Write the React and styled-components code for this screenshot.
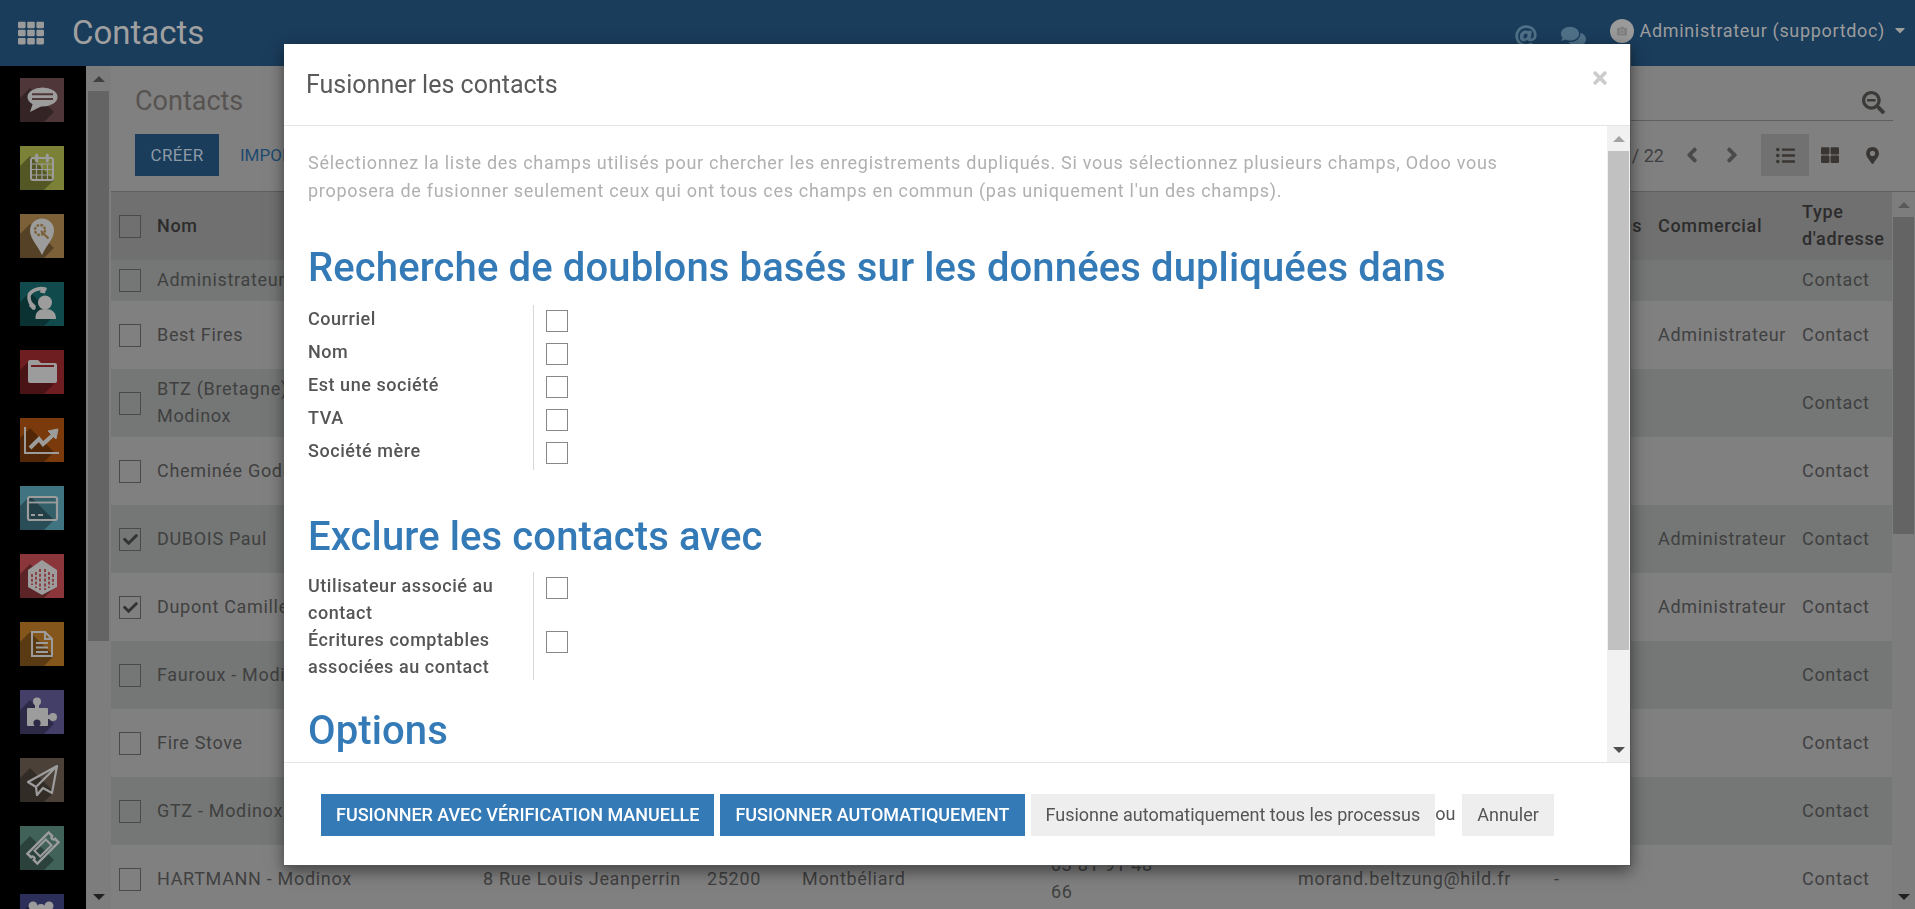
import React from 'react'
import styled, { createGlobalStyle } from 'styled-components'
import {
  FaTh, FaThLarge, FaComments, FaSearchMinus, FaListUl, FaMapMarkerAlt, FaAngleLeft, FaAngleRight,
  FaCheck, FaAt, FaCamera, FaTimes, FaCaretDown,
} from 'react-icons/fa'

const GlobalStyle = createGlobalStyle`
  html, body { margin: 0; height: 100%; overflow: hidden; background: #808080; }
  * { box-sizing: border-box; }
  body { font-family: Roboto, "Liberation Sans", sans-serif; font-size: 18px; }
`

const Page = styled.div`
  width: 1915px;
  height: 909px;
  display: flex;
  flex-direction: column;
  overflow: hidden;
`
const Navbar = styled.header`
  height: 66px;
  flex: none;
  background: #1a3d5c;
  color: #9c9c9c;
  display: flex;
  align-items: center;
  padding: 0 7px 0 18px;
`
const AppTitle = styled.div`
  font-size: 33px;
  margin: 0 0 2px 28px;
  color: #a0a0a0;
`
const NavRight = styled.div`
  margin-left: auto;
  display: flex;
  align-items: center;
  font-size: 18px;
`
const NavIcon = styled.span`
  display: flex;
  color: #4f7188;
  margin-right: 24px;
  padding-top: 6px;
`
const Avatar = styled.span`
  width: 24px;
  height: 24px;
  border-radius: 50%;
  background: #9a9a9a;
  color: #808080;
  display: flex;
  align-items: center;
  justify-content: center;
  margin-right: 6px;
  margin-bottom: 4px;
`
const UserName = styled.span`
  margin-bottom: 6px;
  display: flex;
  align-items: center;
  gap: 7px;
  color: #9c9c9c;
  letter-spacing: 0.67px;
`
const Main = styled.div`
  flex: 1;
  display: flex;
  min-height: 0;
`
const Sidebar = styled.nav`
  width: 86px;
  flex: none;
  background: #000;
  padding: 12px 0 0 20px;
  display: flex;
  flex-direction: column;
  gap: 24px;
  overflow: hidden;
`
const Tile = styled.svg`
  width: 44px;
  height: 44px;
  flex: none;
  display: block;
  color: #9c9c9c;
  background: ${p => p.$color};
`
const Scrollbar = styled.div`
  width: ${p => p.$width}px;
  flex: none;
  display: flex;
  flex-direction: column;
  align-items: center;
  background: ${p => p.$track};
`
const ArrowBox = styled.div`
  height: ${p => p.$height}px;
  flex: none;
  display: flex;
  align-items: center;
  justify-content: center;
  &::after {
    content: '';
    border-left: 6px solid transparent;
    border-right: 6px solid transparent;
    ${p => (p.$down ? `border-top: 6px solid ${p.$color};` : `border-bottom: 6px solid ${p.$color};`)}
  }
`
const Thumb = styled.div`
  width: ${p => p.$width}px;
  height: ${p => p.$height}px;
  flex: none;
  background: ${p => p.$color};
`
const Spacer = styled.div`
  flex: 1;
`
const Content = styled.main`
  flex: 1;
  min-width: 0;
  display: flex;
  flex-direction: column;
`
const ControlTop = styled.div`
  height: 55px;
  flex: none;
  display: flex;
  margin-right: 22px;
`
const Breadcrumb = styled.div`
  flex: 1;
  padding: 14px 0 0 24px;
  display: flex;
  align-items: center;
  font-size: 27px;
  color: #575350;
`
const SearchBox = styled.div`
  flex: 1;
  display: flex;
  justify-content: flex-end;
  align-items: center;
  border-bottom: 1px solid #5f5f5f;
  padding: 18px 8px 0 0;
  color: #3a3a38;
`
const ControlBar = styled.div`
  height: 71px;
  flex: none;
  display: flex;
  align-items: center;
  padding: 0 22px 2px 24px;
  border-bottom: 1px solid #5f5f5f;
`
const PrimaryDim = styled.div`
  height: 42px;
  width: 84px;
  background: #1a3d5c;
  color: #8d9aa5;
  display: flex;
  align-items: center;
  justify-content: center;
  font-size: 17px;
  letter-spacing: 0.3px;
`
const LinkDim = styled.div`
  margin-left: 21px;
  color: #1d4a70;
  font-size: 17px;
`
const Pager = styled.div`
  margin-left: auto;
  display: flex;
  align-items: center;
  margin-right: 9px;
  color: #404040;
`
const PagerText = styled.span`
  margin-right: 8px;
`
const PagerBtn = styled.span`
  width: 40px;
  display: flex;
  justify-content: center;
  color: #4a4a4a;
`
const ViewBtn = styled.span`
  width: ${p => p.$width}px;
  height: 42px;
  display: flex;
  align-items: center;
  justify-content: center;
  color: #383532;
  background: ${p => (p.$active ? '#717171' : 'transparent')};
`
const TableWrap = styled.div`
  flex: 1;
  min-height: 0;
  display: flex;
`
const Table = styled.div`
  flex: 1;
  min-width: 0;
  overflow: hidden;
`
const Row = styled.div`
  display: grid;
  grid-template-columns: 46px 326px 224px 95px 249px 247px 256px 104px 144px 90px;
  align-items: center;
  height: ${p => p.$height || 68}px;
  background: ${p => p.$bg};
  color: ${p => (p.$head ? '#2c2c2c' : '#404040')};
  font-weight: ${p => (p.$head ? 500 : 400)};
  line-height: 27px;
  letter-spacing: 0.68px;
`
const Cell = styled.div`
  white-space: nowrap;
  padding-bottom: 2px;
`
const Check = styled.span`
  width: 22px;
  height: 23px;
  margin-left: 8px;
  border: 1px solid #4a4a4a;
  display: flex;
  align-items: center;
  justify-content: center;
  color: #333;
`
const Overlay = styled.div`
  position: fixed;
  left: 284px;
  top: 44px;
  width: 1347px;
  height: 822px;
  background: #fff;
  border: 1px solid #555;
  border-width: 0 1px 1px 0;
  box-shadow: 0 5px 15px rgba(0, 0, 0, 0.5);
  display: flex;
  flex-direction: column;
`
const ModalHeader = styled.div`
  height: 82px;
  flex: none;
  padding: 0 20px 0 22px;
  display: flex;
  align-items: center;
  justify-content: space-between;
  border-bottom: 1px solid #e5e5e5;
`
const ModalTitle = styled.h4`
  margin: 0;
  font-size: 25px;
  font-weight: 400;
  color: #5a5a5a;
`
const CloseBtn = styled.span`
  display: flex;
  color: #cccccc;
  margin-bottom: 14px;
`
const ModalMiddle = styled.div`
  flex: 1;
  min-height: 0;
  display: flex;
`
const ModalBody = styled.div`
  flex: 1;
  min-width: 0;
  overflow: hidden;
  padding: 23px 24px 0;
`
const Intro = styled.p`
  margin: 0 0 41px;
  line-height: 28px;
  color: #b0b0b0;
  letter-spacing: 0.7px;
  white-space: nowrap;
`
const SectionTitle = styled.h1`
  margin: ${p => p.$top || 0}px 0 ${p => p.$bottom ?? 15}px;
  font-size: 40px;
  line-height: 44px;
  font-weight: 500;
  color: #337ab7;
  letter-spacing: 0.12px;
`
const FieldGroup = styled.div`
  display: grid;
  grid-template-columns: 225px 1fr;
`
const FieldLabel = styled.div`
  font-weight: 500;
  line-height: 27px;
  color: #555;
  letter-spacing: 0.55px;
  min-height: ${p => p.$height}px;
`
const FieldValue = styled.div`
  border-left: 1px solid #d8d8d8;
  padding: ${p => p.$pad}px 0 0 12px;
  min-height: ${p => p.$height}px;
`
const CheckBox = styled.span`
  display: block;
  width: 22px;
  height: 22px;
  border: 1px solid #888;
`
const ModalFooter = styled.div`
  height: 103px;
  flex: none;
  border-top: 1px solid #e5e5e5;
  padding: 31px 0 0 37px;
  display: flex;
  align-items: flex-start;
`
const Button = styled.button`
  height: 42px;
  border: 0;
  padding: 0 15px 2px;
  margin-right: ${p => p.$gap ?? 6}px;
  font: inherit;
  font-weight: ${p => (p.$primary ? 500 : 400)};
  letter-spacing: ${p => (p.$primary ? '-0.03px' : '0')};
  text-transform: ${p => (p.$primary ? 'uppercase' : 'none')};
  background: ${p => (p.$primary ? '#337ab7' : '#eeeeee')};
  color: ${p => (p.$primary ? '#fff' : '#555')};
`
const Or = styled.span`
  line-height: 40px;
  color: #555;
  width: 27px;
`

const shade = 'rgba(0,0,0,0.32)'

const tiles = [
  {
    color: '#4e3639',
    glyph: (
      <g>
        <ellipse cx="22.5" cy="19" rx="15" ry="9.5" fill="currentColor" />
        <path d="M13 25 L10 34 L22 28 Z" fill="currentColor" />
        <path d="M12 16.2h21M12 21h21" stroke="#4e3639" strokeWidth="2" />
      </g>
    ),
  },
  {
    color: '#7b8136',
    glyph: (
      <g fill="none" stroke="currentColor">
        <rect x="11" y="12" width="22" height="22" rx="2" strokeWidth="2" />
        <path d="M16.7 9v6M27.3 9v6" strokeWidth="3" strokeLinecap="round" />
        <path d="M11 18h22M11 23.500h22M11 29h22M16.500 18v16M22 18v16M27.500 18v16" strokeWidth="1.2" />
      </g>
    ),
  },
  {
    color: '#7c6138',
    glyph: (
      <g>
        <path d="M22 41 C17 30 10 25 10 16.500 A12 12 0 0 1 34 16.500 C34 25 27 30 22 41 Z" fill="currentColor" />
        <circle cx="20" cy="16" r="5" fill="none" stroke="#7c6138" strokeWidth="2.4" strokeDasharray="2.600 1.300" />
        <path d="M21 17l7.500 7.500" stroke="#7c6138" strokeWidth="2.200" />
      </g>
    ),
  },
  {
    color: '#114a4c',
    glyph: (
      <g>
        <path d="M25 7 C19 5 8 9 9 16 C9.500 20 11 23 14 26" fill="none" stroke="currentColor" strokeWidth="3.500" strokeLinecap="round" />
        <path d="M21 5.500l5 1-1 5-5-1ZM12 20l4 4-3 4-4-4Z" fill="currentColor" />
        <circle cx="25" cy="20.500" r="7" fill="currentColor" />
        <path d="M15.500 37 C15 30 19 27 25 27 C32 27 36 30 36 37 Z" fill="currentColor" />
      </g>
    ),
  },
  {
    color: '#6e1d21',
    glyph: (
      <g>
        <path d="M8 12 a2 2 0 0 1 2 -2 h8 l3 3 h14 a2 2 0 0 1 2 2 v16 a2 2 0 0 1 -2 2 H10 a2 2 0 0 1 -2 -2 Z" fill="currentColor" />
        <path d="M11 16h23" stroke="#6e1d21" strokeWidth="2" />
      </g>
    ),
  },
  {
    color: '#7a3a0c',
    glyph: (
      <g fill="none" stroke="currentColor">
        <path d="M5 9v26h34" strokeWidth="2" />
        <path d="M10 30l9-9 4 5 10-9" strokeWidth="4" />
        <path d="M28 13l10-2-2 10Z" fill="currentColor" strokeWidth="1" />
      </g>
    ),
  },
  {
    color: '#3f7480',
    glyph: (
      <g>
        <rect x="8" y="11" width="29" height="23" rx="2" fill="rgba(0,0,0,0.18)" stroke="currentColor" strokeWidth="2.200" />
        <path d="M9 16.500h27" stroke="currentColor" strokeWidth="1.800" />
        <path d="M11 29h4M18 29h5" stroke="currentColor" strokeWidth="2" />
      </g>
    ),
  },
  {
    color: '#8a363a',
    glyph: (
      <g>
        <path d="M22 6 L37 16 V33 L22 41 L8 33 V16 Z" fill="currentColor" />
        <path d="M12 20v11M16 18v16M20 15v21M25 15v21M29 18v16M33 20v11" stroke="#8a363a" strokeWidth="1.800" strokeDasharray="3 1.800" />
      </g>
    ),
  },
  {
    color: '#84561b',
    glyph: (
      <g fill="none" stroke="currentColor" strokeWidth="2">
        <path d="M12 10h13l7 7v17H12Z" />
        <path d="M25 10v7h7" />
        <path d="M16 21h12M16 25.500h12M16 30h12" />
      </g>
    ),
  },
  {
    color: '#433f69',
    glyph: (
      <g fill="currentColor">
        <circle cx="17" cy="11.500" r="4" />
        <rect x="15" y="12" width="4" height="8" />
        <rect x="7" y="18" width="21" height="18" rx="1" />
        <circle cx="33" cy="27" r="4" />
        <rect x="26" y="25" width="6" height="4" />
        <circle cx="17" cy="33" r="3.600" fill="#2d2a47" />
        <rect x="15.500" y="33" width="3" height="4" fill="#2d2a47" />
      </g>
    ),
  },
  {
    color: '#4b4138',
    glyph: (
      <path d="M37 8 L8 24 L16 29 L17 37 L23 30 L32 35 Z M37 8 L16 29" fill="none" stroke="currentColor" strokeWidth="2.200" strokeLinejoin="round" />
    ),
  },
  {
    color: '#406259',
    glyph: (
      <g transform="rotate(-45 23 22)">
        <path d="M8 15 h30 v5 a2 2 0 0 0 0 4 v5 H8 v-5 a2 2 0 0 0 0 -4 Z" fill="none" stroke="currentColor" strokeWidth="2.400" />
        <rect x="15" y="18" width="16" height="8" fill="none" stroke="currentColor" strokeWidth="2" />
      </g>
    ),
  },
  {
    color: '#2c2f5a',
    glyph: (
      <g fill="currentColor">
        <circle cx="13" cy="12" r="4.500" />
        <circle cx="29" cy="12" r="4.500" />
        <circle cx="21" cy="15" r="5" />
      </g>
    ),
  },
]

const rows = [
  { name: 'Administrateur', height: 41, type: 'Contact' },
  { name: 'Best Fires', sales: 'Administrateur', type: 'Contact' },
  { name: <>BTZ (Bretagne) -<br />Modinox</>, type: 'Contact' },
  { name: 'Cheminée Godin', type: 'Contact' },
  { name: 'DUBOIS Paul', checked: true, sales: 'Administrateur', type: 'Contact' },
  { name: 'Dupont Camille', checked: true, sales: 'Administrateur', type: 'Contact' },
  { name: 'Fauroux - Modinox', type: 'Contact' },
  { name: 'Fire Stove', type: 'Contact' },
  { name: 'GTZ - Modinox', type: 'Contact' },
  {
    name: 'HARTMANN - Modinox',
    address: '8 Rue Louis Jeanperrin',
    zip: '25200',
    city: 'Montbéliard',
    phone: <>03 81 91 48<br />66</>,
    email: 'morand.beltzung@hild.fr',
    dash: '-',
    type: 'Contact',
  },
]

const duplicateFields = ['Courriel', 'Nom', 'Est une société', 'TVA', 'Société mère']
const excludeFields = [
  <>Utilisateur associé au<br />contact</>,
  <>Écritures comptables<br />associées au contact</>,
]

export default function App() {
  return (
    <>
      <GlobalStyle />
      <Page>
        <Navbar>
          <FaTh size={26} color="#9a9a9a" />
          <AppTitle>Contacts</AppTitle>
          <NavRight>
            <NavIcon><FaAt size={22} /></NavIcon>
            <NavIcon><FaComments size={25} /></NavIcon>
            <Avatar><FaCamera size={10} /></Avatar>
            <UserName>Administrateur (supportdoc) <FaCaretDown size={16} /></UserName>
          </NavRight>
        </Navbar>
        <Main>
          <Sidebar>
            {tiles.map((t, i) => (
              <Tile key={i} viewBox="0 0 44 44" $color={t.color}>
                <polygon points="10,10 0,20 0,44 24,44 34,34" fill={shade} />
                {t.glyph}
              </Tile>
            ))}
          </Sidebar>
          <Scrollbar $width={25} $track="#7d7d7d">
            <ArrowBox $height={25} $color="#404040" />
            <Thumb $width={21} $height={550} $color="#646464" />
            <Spacer />
            <ArrowBox $height={25} $down $color="#202020" />
          </Scrollbar>
          <Content>
            <ControlTop>
              <Breadcrumb>Contacts</Breadcrumb>
              <SearchBox><FaSearchMinus size={23} /></SearchBox>
            </ControlTop>
            <ControlBar>
              <PrimaryDim>CRÉER</PrimaryDim>
              <LinkDim>IMPORTER</LinkDim>
              <Pager>
                <PagerText>1-22 / 22</PagerText>
                <PagerBtn><FaAngleLeft size={24} /></PagerBtn>
                <PagerBtn><FaAngleRight size={24} /></PagerBtn>
              </Pager>
              <ViewBtn $width={48} $active><FaListUl size={19} /></ViewBtn>
              <ViewBtn $width={42}><FaThLarge size={18} /></ViewBtn>
              <ViewBtn $width={42}><FaMapMarkerAlt size={17} /></ViewBtn>
            </ControlBar>
            <TableWrap>
              <Table>
                <Row $height={68} $bg="#707070" $head>
                  <Check />
                  <Cell>Nom</Cell>
                  <Cell>Adresse</Cell>
                  <Cell>CP</Cell>
                  <Cell>Ville</Cell>
                  <Cell>Téléphone</Cell>
                  <Cell>Courriel</Cell>
                  <Cell>Étiquettes</Cell>
                  <Cell>Commercial</Cell>
                  <Cell>Type<br />d'adresse</Cell>
                </Row>
                {rows.map((r, i) => (
                  <Row key={i} $height={r.height} $bg={i % 2 ? '#808080' : '#747776'}>
                    <Check>{r.checked && <FaCheck size={15} />}</Check>
                    <Cell>{r.name}</Cell>
                    <Cell>{r.address}</Cell>
                    <Cell>{r.zip}</Cell>
                    <Cell>{r.city}</Cell>
                    <Cell>{r.phone}</Cell>
                    <Cell>{r.email}</Cell>
                    <Cell>{r.dash}</Cell>
                    <Cell>{r.sales}</Cell>
                    <Cell>{r.type}</Cell>
                  </Row>
                ))}
              </Table>
              <Scrollbar $width={23} $track="#7d7d7d">
                <ArrowBox $height={25} $color="#5a5a5a" />
                <Thumb $width={21} $height={317} $color="#646464" />
                <Spacer />
                <ArrowBox $height={25} $down $color="#202020" />
              </Scrollbar>
            </TableWrap>
          </Content>
        </Main>
      </Page>
      <Overlay>
        <ModalHeader>
          <ModalTitle>Fusionner les contacts</ModalTitle>
          <CloseBtn><FaTimes size={20} /></CloseBtn>
        </ModalHeader>
        <ModalMiddle>
          <ModalBody>
            <Intro>
              Sélectionnez la liste des champs utilisés pour chercher les enregistrements dupliqués. Si vous sélectionnez plusieurs champs, Odoo vous
              <br />
              proposera de fusionner seulement ceux qui ont tous ces champs en commun (pas uniquement l'un des champs).
            </Intro>
            <SectionTitle>Recherche de doublons basés sur les données dupliquées dans</SectionTitle>
            <FieldGroup>
              {duplicateFields.map(f => (
                <React.Fragment key={f}>
                  <FieldLabel $height={33}>{f}</FieldLabel>
                  <FieldValue $height={33} $pad={5}><CheckBox /></FieldValue>
                </React.Fragment>
              ))}
            </FieldGroup>
            <SectionTitle $top={45} $bottom={13}>Exclure les contacts avec</SectionTitle>
            <FieldGroup>
              {excludeFields.map((f, i) => (
                <React.Fragment key={i}>
                  <FieldLabel $height={54}>{f}</FieldLabel>
                  <FieldValue $height={54} $pad={5}><CheckBox /></FieldValue>
                </React.Fragment>
              ))}
            </FieldGroup>
            <SectionTitle $top={29}>Options</SectionTitle>
          </ModalBody>
          <Scrollbar $width={23} $track="#f1f1f1">
            <ArrowBox $height={25} $color="#a3a3a3" />
            <Thumb $width={21} $height={499} $color="#c1c1c1" />
            <Spacer />
            <ArrowBox $height={25} $down $color="#505050" />
          </Scrollbar>
        </ModalMiddle>
        <ModalFooter>
          <Button $primary>Fusionner avec vérification manuelle</Button>
          <Button $primary>Fusionner automatiquement</Button>
          <Button $gap={0}>Fusionne automatiquement tous les processus</Button>
          <Or>ou</Or>
          <Button>Annuler</Button>
        </ModalFooter>
      </Overlay>
    </>
  )
}
